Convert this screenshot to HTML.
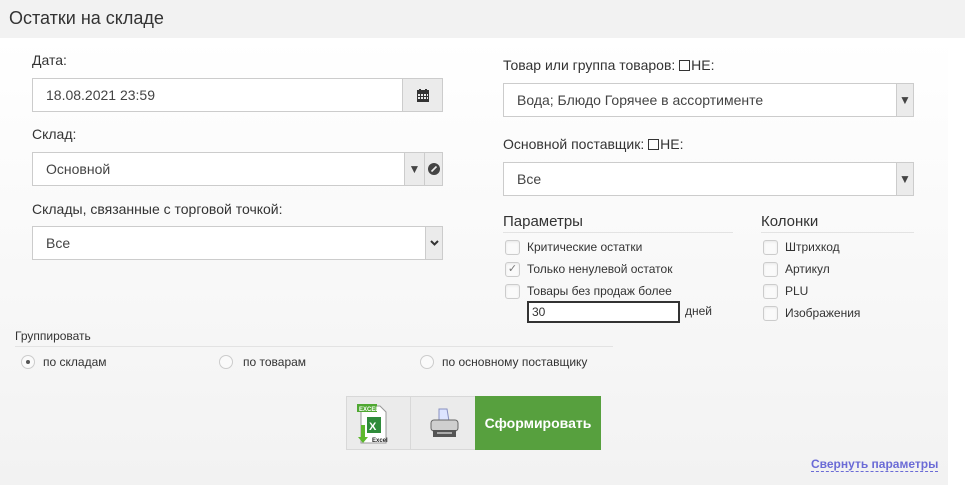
<!DOCTYPE html>
<html><head><meta charset="utf-8"><style>
*{box-sizing:border-box;margin:0;padding:0}
body{width:965px;height:485px;overflow:hidden;font-family:"Liberation Sans",Arial,sans-serif;color:#333;background:#fff;position:relative}
.hdr{position:absolute;left:0;top:0;width:965px;height:38px;background:#f2f2f2}
.hdr span{position:absolute;left:9px;top:8px;font-size:18px;color:#333}
.main{position:absolute;left:0;top:38px;width:948px;height:447px;background:linear-gradient(#fff,#f2f2f2)}
.a{position:absolute;white-space:nowrap}
.lbl{font-size:14px;color:#333}
.box{position:absolute;background:#fff;border:1px solid #ccc;font-size:14px;color:#444;padding-left:13px}
.cell{position:absolute;top:-1px;bottom:-1px;background:#ebebeb;border:1px solid #ccc;display:flex;align-items:center;justify-content:center;font-size:12px;color:#444}
.cb{position:absolute;width:15px;height:15px;border:1px solid #ccc;border-radius:3px;background:#fafafa;box-shadow:inset 0 1px 2px rgba(0,0,0,.08)}
.t12{font-size:12px;color:#333}
.rd{position:absolute;width:14px;height:14px;border:1px solid #ccc;border-radius:50%;background:#fafafa}
</style></head><body>
<div class="hdr"><span>Остатки на складе</span></div>
<div class="main"></div>

<div class="a lbl" style="left:32px;top:52px">Дата:</div>
<div class="box" style="left:32px;top:78px;width:411px;height:34px;line-height:32px">18.08.2021 23:59
 <div class="cell" style="left:369px;right:-1px;">
  <svg width="12" height="13" viewBox="0 0 12 13"><rect x="0" y="1" width="12" height="12" fill="#333"/><rect x="2" y="0" width="2" height="3" fill="#333"/><rect x="8" y="0" width="2" height="3" fill="#333"/><g fill="#ebebeb"><rect x="1" y="5" width="2" height="2"/><rect x="4" y="5" width="2" height="2"/><rect x="7" y="5" width="2" height="2"/><rect x="10" y="5" width="1" height="2"/><rect x="1" y="8" width="2" height="2"/><rect x="4" y="8" width="2" height="2"/><rect x="7" y="8" width="2" height="2"/><rect x="10" y="8" width="1" height="2"/></g></svg>
 </div></div>

<div class="a lbl" style="left:32px;top:126px">Склад:</div>
<div class="box" style="left:32px;top:152px;width:411px;height:34px;line-height:32px">Основной
 <div class="cell" style="left:371px;width:21px">▼</div>
 <div class="cell" style="left:391px;right:-1px"><svg width="12" height="12"><circle cx="6" cy="6" r="6" fill="#444"/><path d="M3.5 8.5L8.5 3.5" stroke="#eee" stroke-width="1.6"/></svg></div>
</div>

<div class="a lbl" style="left:32px;top:201px">Склады, связанные с торговой точкой:</div>
<div class="box" style="left:32px;top:226px;width:411px;height:34px;line-height:32px">Все
 <div class="cell" style="left:392px;right:-1px"><svg width="9" height="6"><path d="M1 1L4.5 4.5L8 1" stroke="#333" stroke-width="2" fill="none"/></svg></div>
</div>

<div class="a lbl" style="left:503px;top:57px">Товар или группа товаров: <span style="display:inline-block;width:11px;height:11px;border:1px solid #333;vertical-align:-1px;margin-right:1px"></span>НЕ:</div>
<div class="box" style="left:503px;top:83px;width:411px;height:34px;line-height:32px">Вода; Блюдо Горячее в ассортименте
 <div class="cell" style="left:392px;right:-1px">▼</div></div>

<div class="a lbl" style="left:503px;top:136px">Основной поставщик: <span style="display:inline-block;width:11px;height:11px;border:1px solid #333;vertical-align:-1px;margin-right:1px"></span>НЕ:</div>
<div class="box" style="left:503px;top:162px;width:411px;height:34px;line-height:32px">Все
 <div class="cell" style="left:392px;right:-1px">▼</div></div>

<div class="a" style="left:503px;top:213px;font-size:15px">Параметры</div>
<div class="a" style="left:503px;top:232px;width:230px;height:1px;background:#e3e3e3"></div>
<div class="a" style="left:761px;top:213px;font-size:15px">Колонки</div>
<div class="a" style="left:761px;top:232px;width:153px;height:1px;background:#e3e3e3"></div>

<div class="cb" style="left:505px;top:240px"></div><div class="a t12" style="left:527px;top:240px">Критические остатки</div>
<div class="cb" style="left:505px;top:262px;font-size:11px;color:#777;line-height:13px;text-align:center">✓</div><div class="a t12" style="left:527px;top:262px">Только ненулевой остаток</div>
<div class="cb" style="left:505px;top:284px"></div><div class="a t12" style="left:527px;top:284px">Товары без продаж более</div>
<div class="a t12" style="left:527px;top:301px;width:153px;height:22px;border:2px solid #333;background:#fff;padding-left:3px;line-height:18px">30</div>
<div class="a t12" style="left:685px;top:304px">дней</div>

<div class="cb" style="left:763px;top:240px"></div><div class="a t12" style="left:785px;top:240px">Штрихкод</div>
<div class="cb" style="left:763px;top:262px"></div><div class="a t12" style="left:785px;top:262px">Артикул</div>
<div class="cb" style="left:763px;top:284px"></div><div class="a t12" style="left:785px;top:284px">PLU</div>
<div class="cb" style="left:763px;top:306px"></div><div class="a t12" style="left:785px;top:306px">Изображения</div>

<div class="a t12" style="left:15px;top:329px">Группировать</div>
<div class="a" style="left:15px;top:346px;width:598px;height:1px;background:#e3e3e3"></div>
<div class="rd" style="left:21px;top:355px"><div style="position:absolute;left:4px;top:4px;width:4px;height:4px;border-radius:50%;background:#555"></div></div>
<div class="a t12" style="left:43px;top:355px">по складам</div>
<div class="rd" style="left:219px;top:355px"></div><div class="a t12" style="left:243px;top:355px">по товарам</div>
<div class="rd" style="left:420px;top:355px"></div><div class="a t12" style="left:442px;top:355px">по основному поставщику</div>

<div class="a" style="left:346px;top:396px;width:65px;height:54px;background:#ebebeb;border:1px solid #d8d8d8">
 <svg width="64" height="54" viewBox="0 0 64 54"><path d="M14 9h19l6 6v31H14z" fill="#fff" stroke="#999"/><rect x="10" y="7" width="20" height="8" fill="#4fa832"/><text x="12" y="14" font-size="6" fill="#fff" font-family="Liberation Sans" font-weight="bold">EXCEL</text><rect x="20" y="20" width="14" height="16" fill="#2e8b3a"/><text x="22" y="33" font-size="11" fill="#fff" font-family="Liberation Sans" font-weight="bold">X</text><path d="M14 28v12h-3l5 6 5-6h-3V28z" fill="#5cb82c"/><text x="25" y="45" font-size="6" fill="#222" font-family="Liberation Sans" font-weight="bold">Excel</text></svg>
</div>
<div class="a" style="left:410px;top:396px;width:66px;height:54px;background:#ebebeb;border:1px solid #d8d8d8">
 <svg width="64" height="52" viewBox="0 0 64 52"><path d="M28 12h8l2 12h-10z" fill="#dde4ff" stroke="#8890c0"/><rect x="20" y="23" width="27" height="11" rx="3" fill="#cfcfcf" stroke="#666"/><rect x="22" y="33" width="23" height="7" fill="#555"/><rect x="26" y="35" width="15" height="2" fill="#aaa"/></svg>
</div>
<div class="a" style="left:475px;top:396px;width:126px;height:54px;background:#57a03e;color:#fff;font-size:14px;font-weight:bold;text-align:center;line-height:54px">Сформировать</div>

<div class="a" style="left:811px;top:457px;font-size:12px;font-weight:bold;color:#6b6bd6;border-bottom:1px dashed #6b6bd6;line-height:14px">Свернуть параметры</div>
</body></html>
